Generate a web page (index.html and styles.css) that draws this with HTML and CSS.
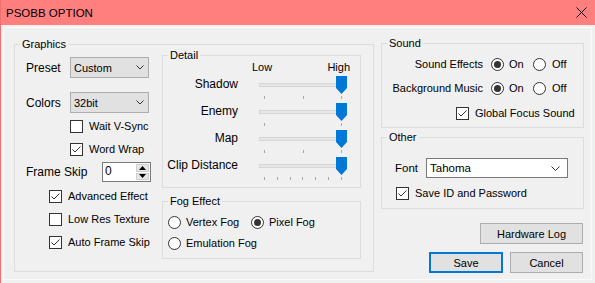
FILE: index.html
```html
<!DOCTYPE html>
<html>
    <head>
        <title>PSOBB OPTION</title>

        <link rel="stylesheet" href="styles.css">
    </head>

    <body>
        <div id="window">
            <div id="titlebar">
                <span class="title">PSOBB OPTION</span>
                <svg class="close" width="11" height="11" viewBox="0 0 11 11"><path d="M0.5 0.5 L10.5 10.5 M10.5 0.5 L0.5 10.5" stroke="#000000" stroke-width="1" fill="none"/></svg>
            </div>

            <div id="client">
                <fieldset class="group graphics">
                    <legend>Graphics</legend>
                    <div class="graphics_body">
                        <div class="left_col">
                            <div class="row preset_row">
                                <span class="big_label">Preset</span>
                                <div class="combo">
                                    <span>Custom</span>
                                    <svg width="8" height="5" viewBox="0 0 8 5"><polyline points="0.5,0.5 4,4 7.5,0.5" stroke="#333333" fill="none"/></svg>
                                </div>
                            </div>
                            <div class="row colors_row">
                                <span class="big_label">Colors</span>
                                <div class="combo">
                                    <span>32bit</span>
                                    <svg width="8" height="5" viewBox="0 0 8 5"><polyline points="0.5,0.5 4,4 7.5,0.5" stroke="#333333" fill="none"/></svg>
                                </div>
                            </div>
                            <div class="check vsync">
                                <span class="box"></span>
                                <span>Wait V-Sync</span>
                            </div>
                            <div class="check wrap">
                                <span class="box"><svg width="11" height="11" viewBox="0 0 11 11"><polyline points="1.5,5.5 4,8 9.5,2.5" stroke="#333333" fill="none"/></svg></span>
                                <span>Word Wrap</span>
                            </div>
                            <div class="row skip_row">
                                <span class="big_label skip_label">Frame Skip</span>
                                <div class="spin">
                                    <span class="spin_value">0</span>
                                    <div class="spin_buttons">
                                        <div class="spin_btn"><svg width="7" height="4" viewBox="0 0 7 4"><polygon points="3.5,0 7,4 0,4" fill="#000000"/></svg></div>
                                        <div class="spin_btn"><svg width="7" height="4" viewBox="0 0 7 4"><polygon points="0,0 7,0 3.5,4" fill="#000000"/></svg></div>
                                    </div>
                                </div>
                            </div>
                            <div class="check effect advanced">
                                <span class="box"><svg width="11" height="11" viewBox="0 0 11 11"><polyline points="1.5,5.5 4,8 9.5,2.5" stroke="#333333" fill="none"/></svg></span>
                                <span>Advanced Effect</span>
                            </div>
                            <div class="check effect">
                                <span class="box"></span>
                                <span>Low Res Texture</span>
                            </div>
                            <div class="check effect">
                                <span class="box"><svg width="11" height="11" viewBox="0 0 11 11"><polyline points="1.5,5.5 4,8 9.5,2.5" stroke="#333333" fill="none"/></svg></span>
                                <span>Auto Frame Skip</span>
                            </div>
                        </div>

                        <div class="right_col">
                            <fieldset class="group detail">
                                <legend>Detail</legend>
                                <div class="detail_head">
                                    <span>Low</span>
                                    <span class="high">High</span>
                                </div>

                                <div class="slider_row">
                                    <span class="slider_label">Shadow</span>
                                    <div class="slider">
                                        <div class="track"></div>
                                        <div class="ticks"><i></i><i></i><i></i></div>
                                        <svg class="thumb" width="11" height="18" viewBox="0 0 11 18"><polygon points="0,0 11,0 11,12 5.5,18 0,12" fill="#0078D7"/></svg>
                                    </div>
                                </div>
                                <div class="slider_row">
                                    <span class="slider_label">Enemy</span>
                                    <div class="slider">
                                        <div class="track"></div>
                                        <div class="ticks"><i></i><i></i></div>
                                        <svg class="thumb" width="11" height="18" viewBox="0 0 11 18"><polygon points="0,0 11,0 11,12 5.5,18 0,12" fill="#0078D7"/></svg>
                                    </div>
                                </div>
                                <div class="slider_row">
                                    <span class="slider_label">Map</span>
                                    <div class="slider">
                                        <div class="track"></div>
                                        <div class="ticks"><i></i><i></i><i></i></div>
                                        <svg class="thumb" width="11" height="18" viewBox="0 0 11 18"><polygon points="0,0 11,0 11,12 5.5,18 0,12" fill="#0078D7"/></svg>
                                    </div>
                                </div>
                                <div class="slider_row">
                                    <span class="slider_label">Clip Distance</span>
                                    <div class="slider">
                                        <div class="track"></div>
                                        <div class="ticks"><i></i><i></i><i></i><i></i><i></i><i></i><i></i></div>
                                        <svg class="thumb" width="11" height="18" viewBox="0 0 11 18"><polygon points="0,0 11,0 11,12 5.5,18 0,12" fill="#0078D7"/></svg>
                                    </div>
                                </div>
                            </fieldset>

                            <fieldset class="group fog">
                                <legend>Fog Effect</legend>
                                <div class="fog_row first">
                                    <div class="opt vertex">
                                        <span class="radio"></span>
                                        <span>Vertex Fog</span>
                                    </div>
                                    <div class="opt">
                                        <span class="radio"><i></i></span>
                                        <span>Pixel Fog</span>
                                    </div>
                                </div>
                                <div class="fog_row second">
                                    <div class="opt">
                                        <span class="radio"></span>
                                        <span>Emulation Fog</span>
                                    </div>
                                </div>
                            </fieldset>
                        </div>
                    </div>
                </fieldset>

                <div class="side_col">
                    <fieldset class="group sound">
                        <legend>Sound</legend>
                        <div class="sound_row first">
                            <span class="sound_label">Sound Effects</span>
                            <div class="opt on">
                                <span class="radio"><i></i></span>
                                <span>On</span>
                            </div>
                            <div class="opt off">
                                <span class="radio"></span>
                                <span>Off</span>
                            </div>
                        </div>
                        <div class="sound_row second">
                            <span class="sound_label">Background Music</span>
                            <div class="opt on">
                                <span class="radio"><i></i></span>
                                <span>On</span>
                            </div>
                            <div class="opt off">
                                <span class="radio"></span>
                                <span>Off</span>
                            </div>
                        </div>
                        <div class="check focus">
                            <span class="box"><svg width="11" height="11" viewBox="0 0 11 11"><polyline points="1.5,5.5 4,8 9.5,2.5" stroke="#333333" fill="none"/></svg></span>
                            <span>Global Focus Sound</span>
                        </div>
                    </fieldset>

                    <fieldset class="group other">
                        <legend>Other</legend>
                        <div class="row font_row">
                            <span class="font_label">Font</span>
                            <div class="combo font_combo">
                                <span>Tahoma</span>
                                <svg width="9" height="5" viewBox="0 0 9 5"><polyline points="0.5,0.5 4.5,4.5 8.5,0.5" stroke="#333333" fill="none"/></svg>
                            </div>
                        </div>
                        <div class="check saveid">
                            <span class="box"><svg width="11" height="11" viewBox="0 0 11 11"><polyline points="1.5,5.5 4,8 9.5,2.5" stroke="#333333" fill="none"/></svg></span>
                            <span>Save ID and Password</span>
                        </div>
                    </fieldset>

                    <div class="button hwlog">Hardware Log</div>
                    <div class="button_row">
                        <div class="button save">Save</div>
                        <div class="button cancel">Cancel</div>
                    </div>
                </div>
            </div>
        </div>
    </body>
</html>
```

FILE: styles.css
```css
body
{
    margin:0;
    font-family:"Liberation Sans", Arial, sans-serif;
    font-size:11px;
    color:#000000;
    background:#F0F0F0;
}

#window
{
    width:595px;
    height:283px;
    box-sizing:border-box;
    border-left:1px solid #F07070;
    background:#F0F0F0;
    display:flex;
    flex-direction:column;
    overflow:hidden;
}

#titlebar
{
    height:25px;
    flex:none;
    background:#FF7F7F;
    display:flex;
    align-items:center;
    justify-content:space-between;
    padding:0 8px 0 5px;
}

.title
{
    font-size:11.5px;
}

#client
{
    flex:1;
    margin:2px 3px 3px 2px;
    border:1px solid #FAFAFA;
    padding:9px 0 0 10px;
    display:flex;
    align-items:flex-start;
}

fieldset.group
{
    margin:0;
    padding:0;
    border:1px solid #DCDCDC;
    min-width:0;
    box-sizing:border-box;
}

fieldset.group legend
{
    padding:0 2px;
    margin-left:5px;
    font-size:11px;
    line-height:12px;
}

fieldset.graphics
{
    width:360px;
    margin-top:1px;
}

.graphics_body
{
    display:flex;
    align-items:flex-start;
    padding:0 12px 12px 0;
}

.left_col
{
    width:147px;
    flex:none;
    box-sizing:border-box;
    padding-left:11px;
}

.row
{
    display:flex;
    align-items:center;
}

.big_label
{
    font-size:12px;
    width:44px;
    flex:none;
}

.preset_row
{
    margin-top:7px;
}

.colors_row
{
    margin-top:14px;
}

.combo
{
    width:79px;
    height:21px;
    box-sizing:border-box;
    border:1px solid #ADADAD;
    background:#E1E1E1;
    display:flex;
    align-items:center;
    justify-content:space-between;
    padding:0 4px 0 3px;
}

.check
{
    display:flex;
    align-items:center;
    height:13px;
    line-height:13px;
}

.box
{
    width:13px;
    height:13px;
    box-sizing:border-box;
    border:1px solid #333333;
    background:#FFFFFF;
    margin-right:6px;
    flex:none;
    display:flex;
}

.vsync
{
    margin-top:7px;
    padding-left:44px;
}

.wrap
{
    margin-top:10px;
    padding-left:44px;
}

.skip_row
{
    margin-top:6px;
}

.skip_label
{
    width:76px;
}

.spin
{
    width:49px;
    height:20px;
    box-sizing:border-box;
    border:1px solid #7A7A7A;
    background:#FFFFFF;
    display:flex;
}

.spin_value
{
    flex:1;
    padding-left:2px;
    line-height:17px;
    font-size:12px;
}

.spin_buttons
{
    width:15px;
    display:flex;
    flex-direction:column;
    gap:1px;
    padding:1px;
    box-sizing:border-box;
}

.spin_btn
{
    flex:1;
    background:#E6E6E6;
    border:1px solid #CFCFCF;
    display:flex;
    align-items:center;
    justify-content:center;
}

.effect
{
    margin-top:10px;
    padding-left:23px;
}

.effect.advanced
{
    margin-top:8px;
}

.right_col
{
    width:199px;
    flex:none;
    margin-top:-1px;
}

fieldset.detail
{
    width:199px;
    padding-bottom:3px;
}

.detail_head
{
    height:15px;
    line-height:13px;
    display:flex;
    padding:0 10px 0 89px;
}

.high
{
    margin-left:auto;
}

.slider_row
{
    display:flex;
    height:27px;
}

.slider_label
{
    width:75px;
    flex:none;
    text-align:right;
    font-size:12px;
    line-height:17px;
}

.slider
{
    width:88px;
    margin-left:21px;
    position:relative;
    display:flex;
    flex-direction:column;
}

.track
{
    width:84px;
    height:4px;
    margin-top:7px;
    box-sizing:border-box;
    border:1px solid #D6D6D6;
    background:#E7E7E7;
}

.ticks
{
    width:78px;
    height:3px;
    margin:9px 0 0 5px;
    display:flex;
    justify-content:space-between;
}

.ticks i
{
    width:1px;
    height:3px;
    background:#A8A8A8;
}

.thumb
{
    position:absolute;
    top:0;
    right:0;
}

fieldset.fog
{
    width:199px;
    margin-top:7px;
    padding-bottom:8px;
}

.fog_row
{
    display:flex;
    height:13px;
    line-height:13px;
    padding-left:5px;
}

.fog_row.first
{
    margin-top:9px;
}

.fog_row.second
{
    margin-top:8px;
}

.opt
{
    display:flex;
    align-items:center;
}

.vertex
{
    width:83px;
}

.radio
{
    width:13px;
    height:13px;
    box-sizing:border-box;
    border:1px solid #333333;
    border-radius:50%;
    background:#FFFFFF;
    margin-right:5px;
    display:flex;
    align-items:center;
    justify-content:center;
    flex:none;
}

.radio i
{
    width:7px;
    height:7px;
    border-radius:50%;
    background:#333333;
}

.side_col
{
    width:203px;
    margin-left:7px;
    display:flex;
    flex-direction:column;
}

fieldset.sound
{
    padding-bottom:7px;
}

.sound_row
{
    display:flex;
    height:13px;
    line-height:13px;
}

.sound_row.first
{
    margin-top:9px;
}

.sound_row.second
{
    margin-top:11px;
}

.sound_label
{
    width:101px;
    text-align:right;
    flex:none;
}

.opt.on
{
    margin-left:8px;
    width:42px;
}

.off .radio
{
    margin-right:6px;
}

.check.focus
{
    margin-top:12px;
    padding-left:74px;
}

fieldset.other
{
    margin-top:3px;
    padding-bottom:8px;
}

.font_row
{
    margin-top:15px;
    padding-left:13px;
}

.font_label
{
    width:31px;
    font-size:11.5px;
}

.font_combo
{
    width:142px;
    height:20px;
    background:#FFFFFF;
    border-color:#7A7A7A;
    padding:0 7px 0 3px;
    font-size:11.5px;
}

.check.saveid
{
    margin-top:9px;
    padding-left:14px;
}

.button
{
    height:21px;
    box-sizing:border-box;
    border:1px solid #ADADAD;
    background:#E1E1E1;
    display:flex;
    align-items:center;
    justify-content:center;
}

.hwlog
{
    width:103px;
    align-self:flex-end;
    margin:14px 1px 0 0;
}

.button_row
{
    display:flex;
    justify-content:flex-end;
    gap:7px;
    margin:8px 1px 0 0;
}

.button.save
{
    width:74px;
    border:2px solid #0078D7;
}

.button.cancel
{
    width:73px;
}
```
